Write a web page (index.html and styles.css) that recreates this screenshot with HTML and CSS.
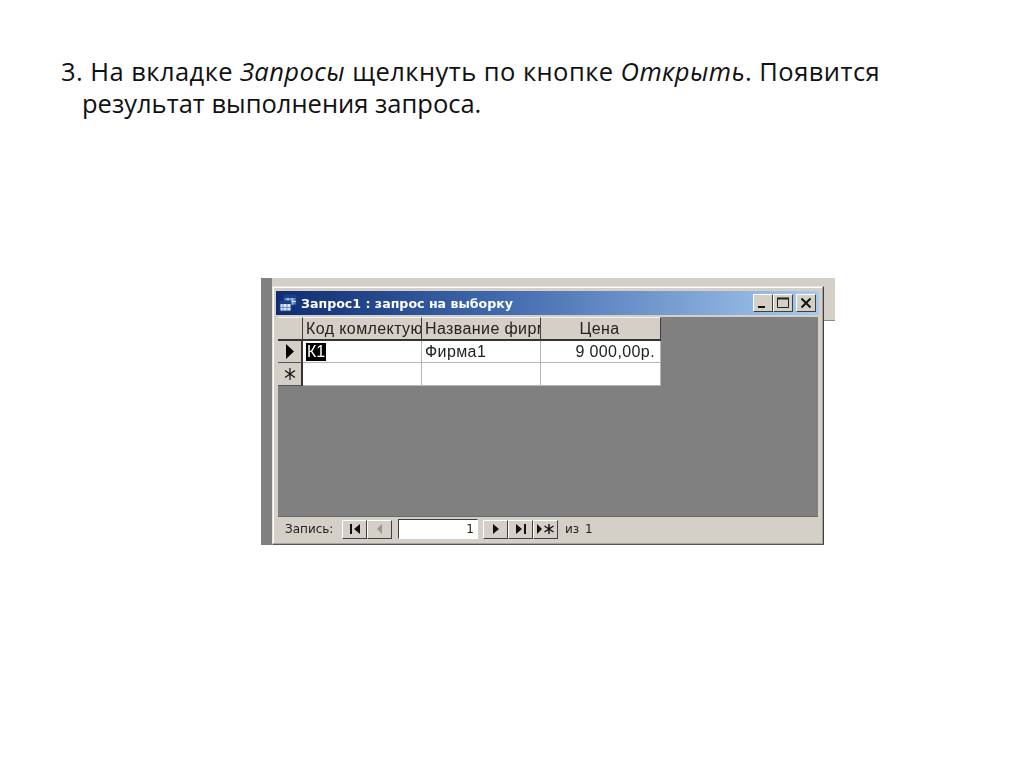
FILE: index.html
```html
<!DOCTYPE html>
<html lang="ru">
<head>
<meta charset="utf-8">
<title>Запрос</title>
<link rel="stylesheet" href="styles.css">
</head>
<body>
<main class="slide">
  <p class="lead">
    <span class="line-one">3. На вкладке <em>Запросы</em> щелкнуть по кнопке <em>Открыть</em>. Появится</span>
    <span class="line-two">результат выполнения запроса.</span>
  </p>
  <div class="shot">
    <div class="shot-top"></div>
    <div class="shot-side"></div>
    <div class="shot-right"></div>
    <section class="win">
      <header class="titlebar">
        <svg class="app-icon" width="18" height="18" viewBox="0 0 18 18">
          <rect x="5" y="1" width="12" height="10" fill="#5f8fc8" stroke="#1c3f86"/>
          <rect x="5" y="1" width="12" height="3" fill="#1c3f86"/>
          <path d="M9 4v7M13 4v7M5 7.5h12" stroke="#d8e6f6"/>
          <rect x="1" y="7" width="11" height="10" fill="#dfe8f4" stroke="#1c3f86"/>
          <rect x="1" y="7" width="11" height="3" fill="#1c3f86"/>
          <path d="M4 10v7M8 10v7M1 13.5h11" stroke="#6f8fbf"/>
        </svg>
        <span class="title-text">Запрос1 : запрос на выборку</span>
        <div class="win-btns">
          <button class="wbtn"><svg width="12" height="12" viewBox="0 0 12 12"><rect x="1" y="9" width="7" height="2" fill="#111"/></svg></button>
          <button class="wbtn"><svg width="14" height="12" viewBox="0 0 14 12"><path d="M1.5 1.5h11v9h-11z" fill="none" stroke="#222"/><path d="M1 1.5h12" stroke="#222" stroke-width="2"/></svg></button>
          <button class="wbtn wbtn-close"><svg width="12" height="12" viewBox="0 0 12 12"><path d="M1.5 1.5l9 9M10.5 1.5l-9 9" stroke="#111" stroke-width="2"/></svg></button>
        </div>
      </header>
      <div class="work">
        <div class="grid">
          <div class="cell head sel"></div>
          <div class="cell head clip">Код комлектующего</div>
          <div class="cell head clip">Название фирмы</div>
          <div class="cell head center">Цена</div>
          <div class="cell sel"><svg width="8" height="15" viewBox="0 0 8 15"><path d="M0 0l8 7.5L0 15z" fill="#000"/></svg></div>
          <div class="cell"><span class="picked">К1</span></div>
          <div class="cell">Фирма1</div>
          <div class="cell right">9 000,00р.</div>
          <div class="cell sel"><svg width="12" height="12" viewBox="0 0 12 12"><path d="M6 0v12M1 2.5l10 7M11 2.5l-10 7" stroke="#111" stroke-width="1.2"/></svg></div>
          <div class="cell"></div>
          <div class="cell"></div>
          <div class="cell"></div>
        </div>
      </div>
      <footer class="nav">
        <span class="nav-label">Запись:</span>
        <div class="nav-group">
          <button class="nbtn"><svg width="14" height="12" viewBox="0 0 14 12"><path d="M2 1h2v10H2zM12 1v10L6 6z" fill="#111"/></svg></button>
          <button class="nbtn"><svg width="14" height="12" viewBox="0 0 14 12"><path d="M9 1v10L4 6z" fill="#9a978f"/></svg></button>
        </div>
        <div class="nav-input">1</div>
        <div class="nav-group">
          <button class="nbtn"><svg width="14" height="12" viewBox="0 0 14 12"><path d="M4 1v10l6-5z" fill="#111"/></svg></button>
          <button class="nbtn"><svg width="14" height="12" viewBox="0 0 14 12"><path d="M2 1v10l6-5zM10 1h2v10h-2z" fill="#111"/></svg></button>
          <button class="nbtn"><svg width="20" height="12" viewBox="0 0 20 12"><path d="M1 1v10l5-5z" fill="#111"/><path d="M13 1v10M8.5 3l9 6M17.5 3l-9 6" stroke="#111" stroke-width="1.4"/></svg></button>
        </div>
        <span class="nav-total">из 1</span>
      </footer>
    </section>
  </div>
</main>
</body>
</html>
```

FILE: styles.css
```css
* { box-sizing: border-box; }
html, body { margin: 0; padding: 0; background: #fff; }
.slide {
  width: 1024px;
  height: 767px;
  overflow: hidden;
  background: #fff;
  padding-top: 55px;
}
.lead {
  margin: 0;
  font-family: "Open Sans", "Noto Sans", sans-serif;
  font-size: 25.5px;
  line-height: 32px;
  color: #111;
  white-space: nowrap;
}
.line-one { display: block; margin-left: 61px; letter-spacing: 0.45px; }
.line-two { display: block; margin-left: 82px; }
.shot {
  position: relative;
  margin: 159px 0 0 261px;
  width: 574px;
  height: 267px;
  padding: 8px 11px 0 11px;
}
.shot-top {
  position: absolute; left: 11px; top: 0; right: 0; height: 8px;
  background: #d4d0c8;
}
.shot-side {
  position: absolute; left: 0; top: 0; bottom: 0; width: 11px;
  background: #808080;
}
.shot-right {
  position: absolute; right: 0; top: 8px; width: 11px; height: 35px;
  background: #d4d0c8;
  border-bottom: 1px solid #8a8a86;
}
.win {
  position: relative;
  width: 552px;
  height: 259px;
  background: #d4d0c8;
  border: 1px solid;
  border-color: #e6e3dc #404040 #555 #e6e3dc;
  box-shadow: inset -1px -1px 0 #a8a49c, inset 1px 1px 0 #fff;
  padding: 4px 4px 0 3px;
  display: flex;
  flex-direction: column;
  filter: blur(0.35px);
}
.titlebar {
  height: 24px;
  flex: none;
  display: flex;
  align-items: center;
  padding: 0 3px 0 3px;
  background: linear-gradient(90deg, #0f2c72 0%, #3f68ac 40%, #a6caf0 100%);
}
.app-icon { flex: none; }
.title-text {
  margin-left: 4px;
  font-family: "DejaVu Sans", sans-serif;
  font-weight: 700;
  font-size: 12.6px;
  color: #fff;
  white-space: nowrap;
}
.win-btns { margin-left: auto; display: flex; }
.wbtn {
  width: 20px; height: 18px; padding: 0;
  display: flex; align-items: center; justify-content: center;
  background: #d4d0c8;
  border: 1px solid;
  border-color: #fff #404040 #404040 #fff;
}
.wbtn-close { margin-left: 3px; }
.work {
  flex: 1;
  background: #808080;
  margin: 2px 1px 0 2px;
  min-height: 0;
  border-bottom: 1px solid #6a6a6a;
}
.grid {
  display: grid;
  grid-template-columns: 25px 119px 119px 120px;
  grid-template-rows: 24px 22px 23px;
  width: 383px;
  background: #fff;
}
.cell {
  font-family: "Liberation Sans", Arial, sans-serif;
  font-size: 16px;
  letter-spacing: 0.4px;
  color: #222;
  background: #fff;
  padding: 0 5px 0 3px;
  display: flex;
  align-items: center;
  white-space: nowrap;
  overflow: hidden;
  border-right: 1px solid #b5b5b5;
  border-bottom: 1px solid #b5b5b5;
}
.cell.head {
  background: #d4d0c8;
  border-top: 1px solid #f4f2ec;
  border-right: 1px solid #404040;
  border-bottom: 2px solid #333;
}
.clip { padding-left: 3px; padding-right: 0; }
.center { justify-content: center; }
.right { justify-content: flex-end; }
.sel {
  background: #d4d0c8;
  justify-content: center;
  padding: 0;
  border-right: 2px solid #333;
  border-bottom: 1px solid #555;
}
.picked {
  background: #000;
  color: #fff;
  padding: 0 1px;
  line-height: 18px;
  letter-spacing: 0;
}
.nav {
  height: 24px;
  flex: none;
  display: flex;
  align-items: center;
  padding-left: 9px;
  margin-bottom: 3px;
  font-family: "DejaVu Sans", sans-serif;
  font-size: 12px;
  color: #222;
}
.nav-label { width: 57px; }
.nav-group { display: flex; }
.nbtn {
  width: 25px; height: 19px; padding: 0;
  display: flex; align-items: center; justify-content: center;
  background: #d4d0c8;
  border: 1px solid;
  border-color: #fff #404040 #404040 #fff;
}
.nav-input {
  width: 80px; height: 20px;
  margin: 0 5px 0 6px;
  background: #fff;
  border: 1px solid;
  border-color: #404040 #fff #fff #404040;
  text-align: right;
  padding-right: 3px;
  line-height: 19px;
}
.nav-total { margin-left: 7px; word-spacing: 2px; }
```
